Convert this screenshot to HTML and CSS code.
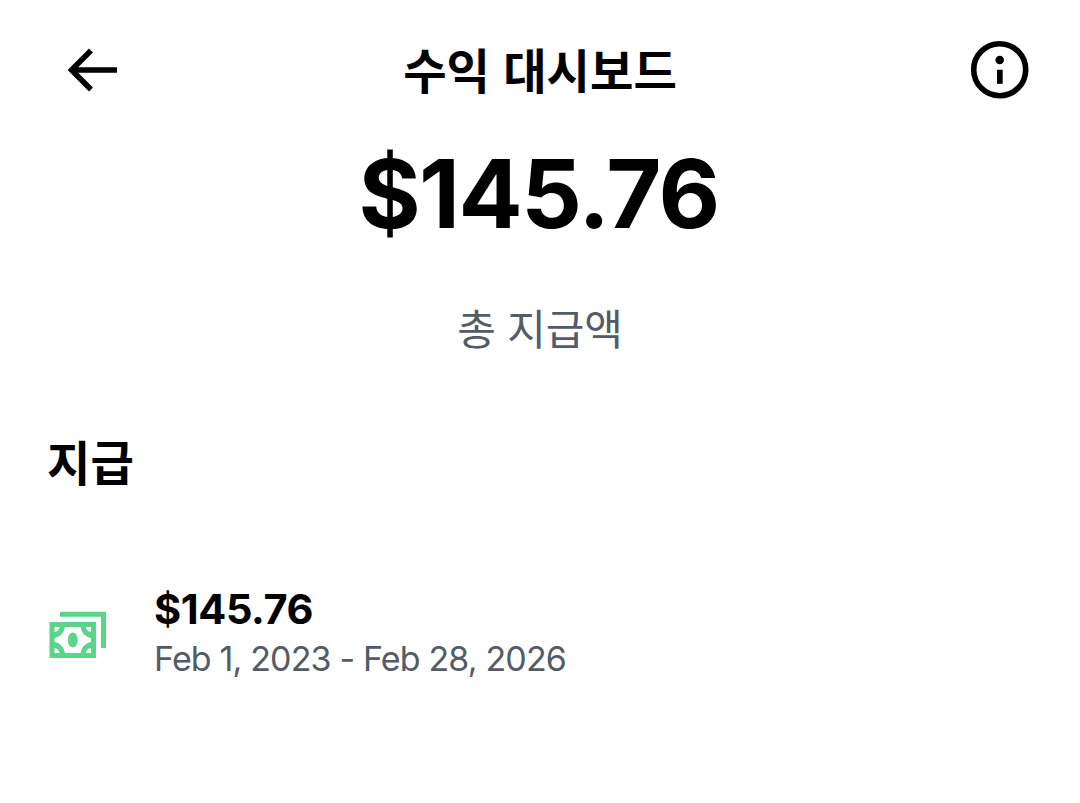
FILE: index.html
```html
<!DOCTYPE html>
<html lang="ko">
<head>
<meta charset="utf-8">
<title>수익 대시보드</title>
<link rel="stylesheet" href="styles.css">
</head>
<body>
<header class="topbar">
  <svg class="back" viewBox="0 0 60 60" width="60" height="60"><path d="M31 10.500 11.500 30 31 49.500M11 30H57" fill="none" stroke="#000" stroke-width="5.500"/></svg>
  <h1 class="title">수익 대시보드</h1>
  <svg class="info" viewBox="0 0 60 60" width="60" height="60"><circle cx="29.700" cy="29.700" r="26" fill="none" stroke="#000" stroke-width="5.600"/><circle cx="29.700" cy="20" r="4.300"/><path d="M27 29.800h5.700v14h-5.700z"/></svg>
</header>
<main>
  <section class="summary">
    <div class="total">$145.76</div>
    <div class="caption">총 지급액</div>
  </section>
  <h2 class="heading">지급</h2>
  <div class="payout">
    <svg class="cash" viewBox="0 0 58 48" width="58" height="48">
      <path d="M11 3.300H54.500V37" fill="none" stroke="#5bd588" stroke-width="5"/>
      <path fill="#5bd588" fill-rule="evenodd" d="M.5 11H47V47H.5ZM5.500 27C10.500 26.500 15.500 21.500 15.800 16H31.700C32 21.500 37 26.500 42 27V31C37 31.500 32 36.500 31.700 42H15.800C15.500 36.500 10.500 31.500 5.500 31ZM5.500 16H10.500C10.300 18.500 8.500 20.700 5.500 21ZM42 16V21C39 20.700 37.200 18.500 37 16ZM5.500 37C8.500 37.300 10.300 39.500 10.500 42H5.500ZM42 37V42H37C37.200 39.500 39 37.300 42 37Z"/>
      <ellipse cx="23.800" cy="29" rx="5" ry="7.600" fill="#5bd588"/>
    </svg>
    <div class="details">
      <div class="amount">$145.76</div>
      <div class="period">Feb 1, 2023 - Feb 28, 2026</div>
    </div>
  </div>
</main>
</body>
</html>
```
FILE: styles.css
```css
* { box-sizing: border-box; }
body {
  margin: 0;
  min-height: 803px;
  background: #fff;
  color: #000;
  font-family: Inter, "Noto Sans CJK KR", sans-serif;
}
.topbar {
  height: 140px;
  padding: 40px 50px 0 60px;
  display: grid;
  grid-template-columns: 60px 1fr 60px;
}
.title {
  margin: -4px 10px 0 0;
  font: 700 47.200px/66px "Noto Sans CJK KR", sans-serif;
  text-align: center;
  white-space: nowrap;
}
.summary { text-align: center; }
.total {
  height: 108px;
  padding-right: 3px;
  font-size: 95px;
  font-weight: 700;
  line-height: 107px;
  letter-spacing: -1.500px;
}
.caption {
  margin-top: 48px;
  font: 400 42px/62px "Noto Sans CJK KR", sans-serif;
  letter-spacing: -0.200px;
  color: #535b66;
}
.heading {
  margin: 70px 0 0 47px;
  font: 700 47.200px/66px "Noto Sans CJK KR", sans-serif;
}
.payout {
  display: flex;
  align-items: flex-start;
  margin: 90px 0 0 49px;
}
.cash { margin-top: 27px; }
.details { margin-left: 47px; white-space: nowrap; }
.amount {
  font-size: 41.500px;
  font-weight: 700;
  line-height: 50px;
  letter-spacing: -0.400px;
}
.period {
  font-size: 34px;
  line-height: 50px;
  letter-spacing: -0.850px;
  color: #535b66;
}
```
